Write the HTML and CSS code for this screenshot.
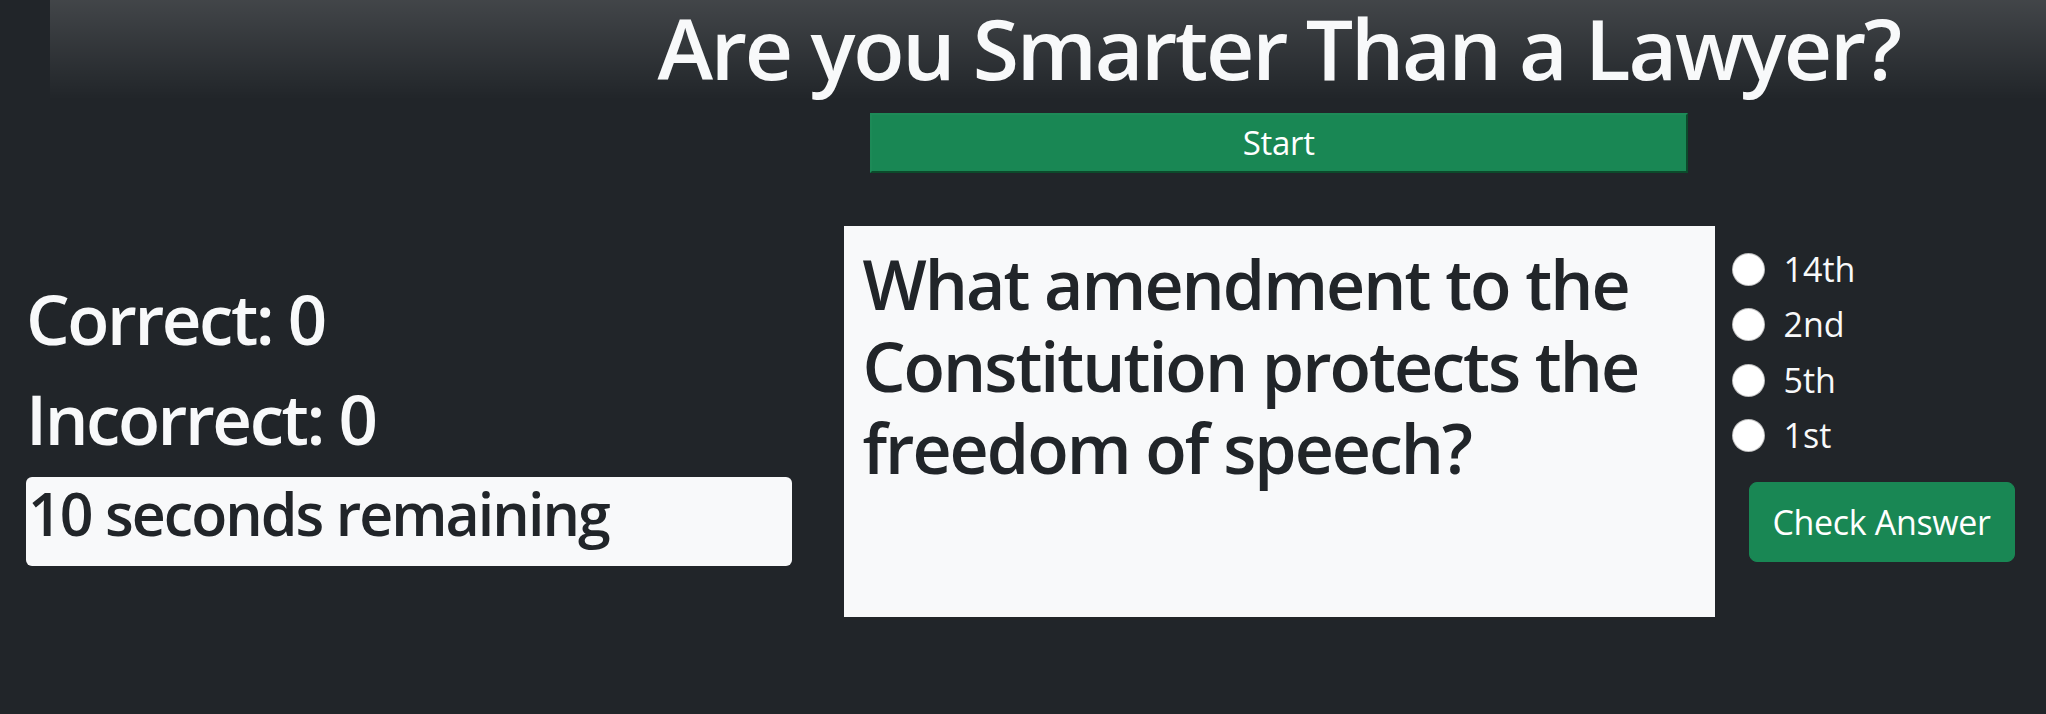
FILE: index.html
```html
<!DOCTYPE html>
<html lang="en">
<head>
<meta charset="utf-8">
<title>Are you Smarter Than a Lawyer?</title>
<link rel="stylesheet" href="styles.css">
</head>
<body>
  <header class="header">
    <h1 class="title">Are you Smarter Than a Lawyer?</h1>
  </header>
  <div class="start-row">
    <button class="start-btn" type="button">Start</button>
  </div>
  <main class="quiz">
    <section class="stats">
      <h2 class="stat">Correct: 0</h2>
      <h2 class="stat">Incorrect: 0</h2>
      <div class="timer">
        <h3 class="timer-text">10 seconds remaining</h3>
      </div>
    </section>
    <section class="question-col">
      <div class="question">
        <h2 class="question-text">What amendment to the Constitution protects the freedom of speech?</h2>
      </div>
    </section>
    <section class="answers">
      <form class="choices">
        <label class="choice"><input class="radio" type="radio" name="answer" value="14th"><span>14th</span></label>
        <label class="choice"><input class="radio" type="radio" name="answer" value="2nd"><span>2nd</span></label>
        <label class="choice"><input class="radio" type="radio" name="answer" value="5th"><span>5th</span></label>
        <label class="choice"><input class="radio" type="radio" name="answer" value="1st"><span>1st</span></label>
      </form>
      <button class="check-btn" type="button">Check Answer</button>
    </section>
  </main>
</body>
</html>
```

FILE: styles.css
```css
* {
  box-sizing: border-box;
}

html, body {
  margin: 0;
  padding: 0;
}

body {
  background: #212529;
  color: #f8f9fa;
  font-family: "Open Sans", "Noto Sans", sans-serif;
  font-size: 34.5px;
  line-height: 1.5;
  min-height: 714px;
}

.header {
  margin-left: 50px;
  padding-top: 2px;
  padding-left: calc(25% - 50px);
  padding-bottom: 7px;
  background-image: linear-gradient(180deg, rgba(255, 255, 255, 0.15), rgba(255, 255, 255, 0));
}

.title {
  margin: 0;
  font-size: 84px;
  font-weight: 600;
  line-height: 91px;
  text-align: center;
  letter-spacing: -0.027em;
}

.start-row {
  margin-left: 25%;
  padding-top: 13px;
  display: flex;
  justify-content: center;
}

.start-btn {
  width: 818px;
  height: 60px;
  padding: 2px 6px;
  font-family: inherit;
  font-size: 33px;
  line-height: 52px;
  color: #fff;
  background: #198754;
  border: 2px solid;
  border-color: #1d8a57 #0c4a2b #0c4a2b #1d8a57;
  letter-spacing: -0.01em;
}

.quiz {
  display: grid;
  grid-template-columns: 40% 43.8% 1fr;
  align-items: center;
  margin-top: 53px;
}

.stats {
  padding: 0 26px;
}

.stat {
  margin: 0 0 17px;
  font-size: 69px;
  font-weight: 600;
  line-height: 1.2;
  letter-spacing: -0.035em;
}

.timer {
  background: #f8f9fa;
  color: #212529;
  border-radius: 6px;
  padding-bottom: 17px;
}

.timer-text {
  margin: 0;
  padding-left: 2px;
  font-size: 59px;
  font-weight: 600;
  line-height: 72px;
  letter-spacing: -0.033em;
}

.question-col {
  padding-left: 26px;
}

.question {
  height: 391px;
  background: #f8f9fa;
  color: #212529;
  padding: 17px 18px;
}

.question-text {
  margin: 0;
  font-size: 68px;
  font-weight: 600;
  line-height: 82px;
  letter-spacing: -0.029em;
}

.answers {
  align-self: start;
  padding: 17px 0 0 17px;
}

.choices {
  display: flex;
  flex-direction: column;
  gap: 3.5px;
  margin: 0;
}

.choice {
  display: flex;
  align-items: center;
  gap: 19px;
  height: 52px;
  font-size: 34px;
}

.radio {
  appearance: none;
  -webkit-appearance: none;
  width: 33px;
  height: 33px;
  margin: 0;
  border-radius: 50%;
  background: #fff;
  border: 1px solid rgba(0, 0, 0, 0.25);
  flex: none;
}

.check-btn {
  margin: 20px 0 0 17px;
  width: 266px;
  height: 80px;
  padding: 0;
  font-family: inherit;
  font-size: 34px;
  color: #fff;
  background: #198754;
  border: 1px solid #198754;
  border-radius: 8px;
  letter-spacing: -0.01em;
}
```
